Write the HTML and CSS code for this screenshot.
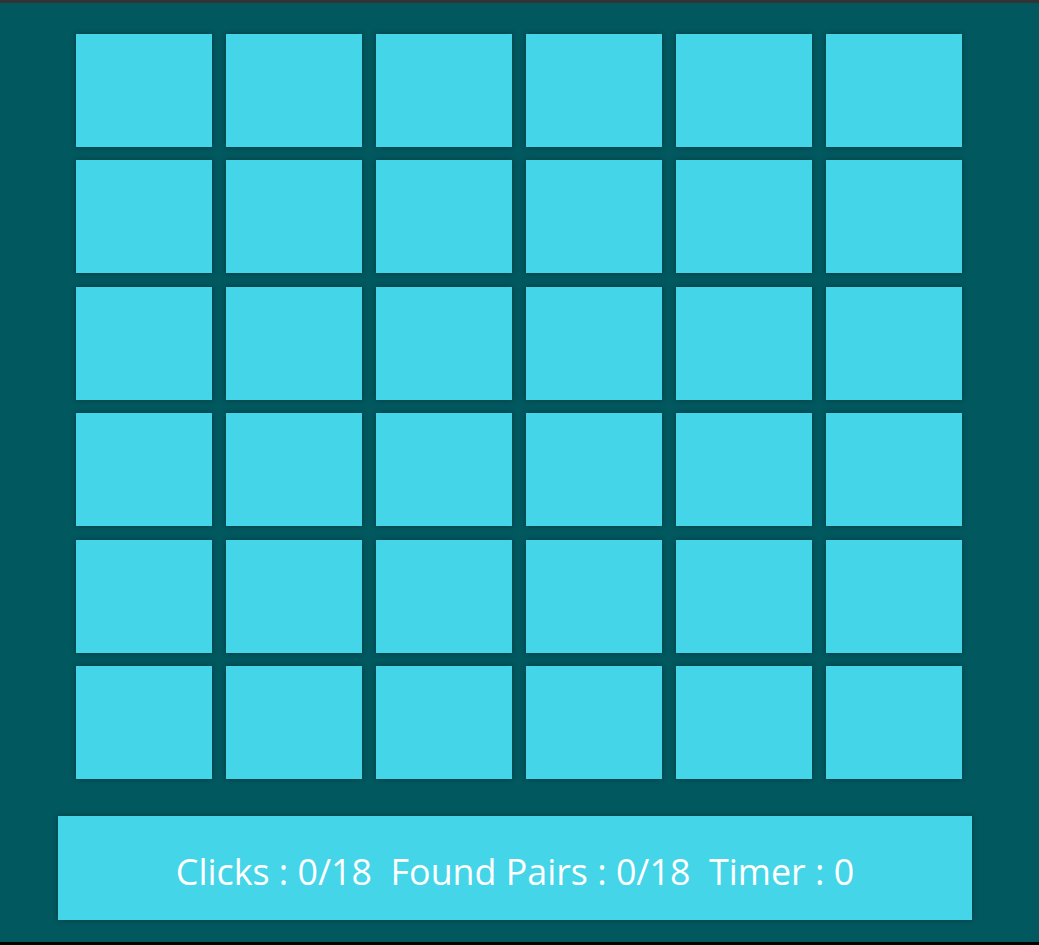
FILE: index.html
```html
<!DOCTYPE html>
<html>
<head>
<meta charset="utf-8">
<link rel="stylesheet" href="styles.css">
</head>
<body>
<div class="page">
  <div class="board">
    <div class="tile"></div><div class="tile"></div><div class="tile"></div><div class="tile"></div><div class="tile"></div><div class="tile"></div>
    <div class="tile"></div><div class="tile"></div><div class="tile"></div><div class="tile"></div><div class="tile"></div><div class="tile"></div>
    <div class="tile"></div><div class="tile"></div><div class="tile"></div><div class="tile"></div><div class="tile"></div><div class="tile"></div>
    <div class="tile"></div><div class="tile"></div><div class="tile"></div><div class="tile"></div><div class="tile"></div><div class="tile"></div>
    <div class="tile"></div><div class="tile"></div><div class="tile"></div><div class="tile"></div><div class="tile"></div><div class="tile"></div>
    <div class="tile"></div><div class="tile"></div><div class="tile"></div><div class="tile"></div><div class="tile"></div><div class="tile"></div>
  </div>
  <div class="status">Clicks : 0/18  Found Pairs : 0/18  Timer : 0</div>
</div>
</body>
</html>
```
FILE: styles.css
```css
html, body {
  margin: 0;
  padding: 0;
}
body {
  background: #02585f;
  font-family: "Open Sans", "Noto Sans", sans-serif;
}
.page {
  box-sizing: border-box;
  height: 945px;
  border-top: 3px solid #333333;
  border-bottom: 3px solid #000000;
  background: #02585f;
  padding-top: 31px;
}
.board {
  display: grid;
  grid-template-columns: repeat(6, 136px);
  grid-template-rows: repeat(6, 113px);
  column-gap: 14px;
  row-gap: 13.4px;
  width: 886px;
  margin-left: 76px;
}
.tile {
  background: #44d5e8;
  box-shadow: 0 0 5px rgba(0, 0, 0, 0.35);
}
.status {
  margin-top: 37px;
  margin-left: 58px;
  width: 914px;
  height: 104px;
  background: #44d5e8;
  box-shadow: 0 0 5px rgba(0, 0, 0, 0.35);
  color: #ffffff;
  font-size: 35.8px;
  white-space: pre;
  display: flex;
  align-items: center;
  justify-content: center;
  padding-top: 6px;
  box-sizing: border-box;
}
```
